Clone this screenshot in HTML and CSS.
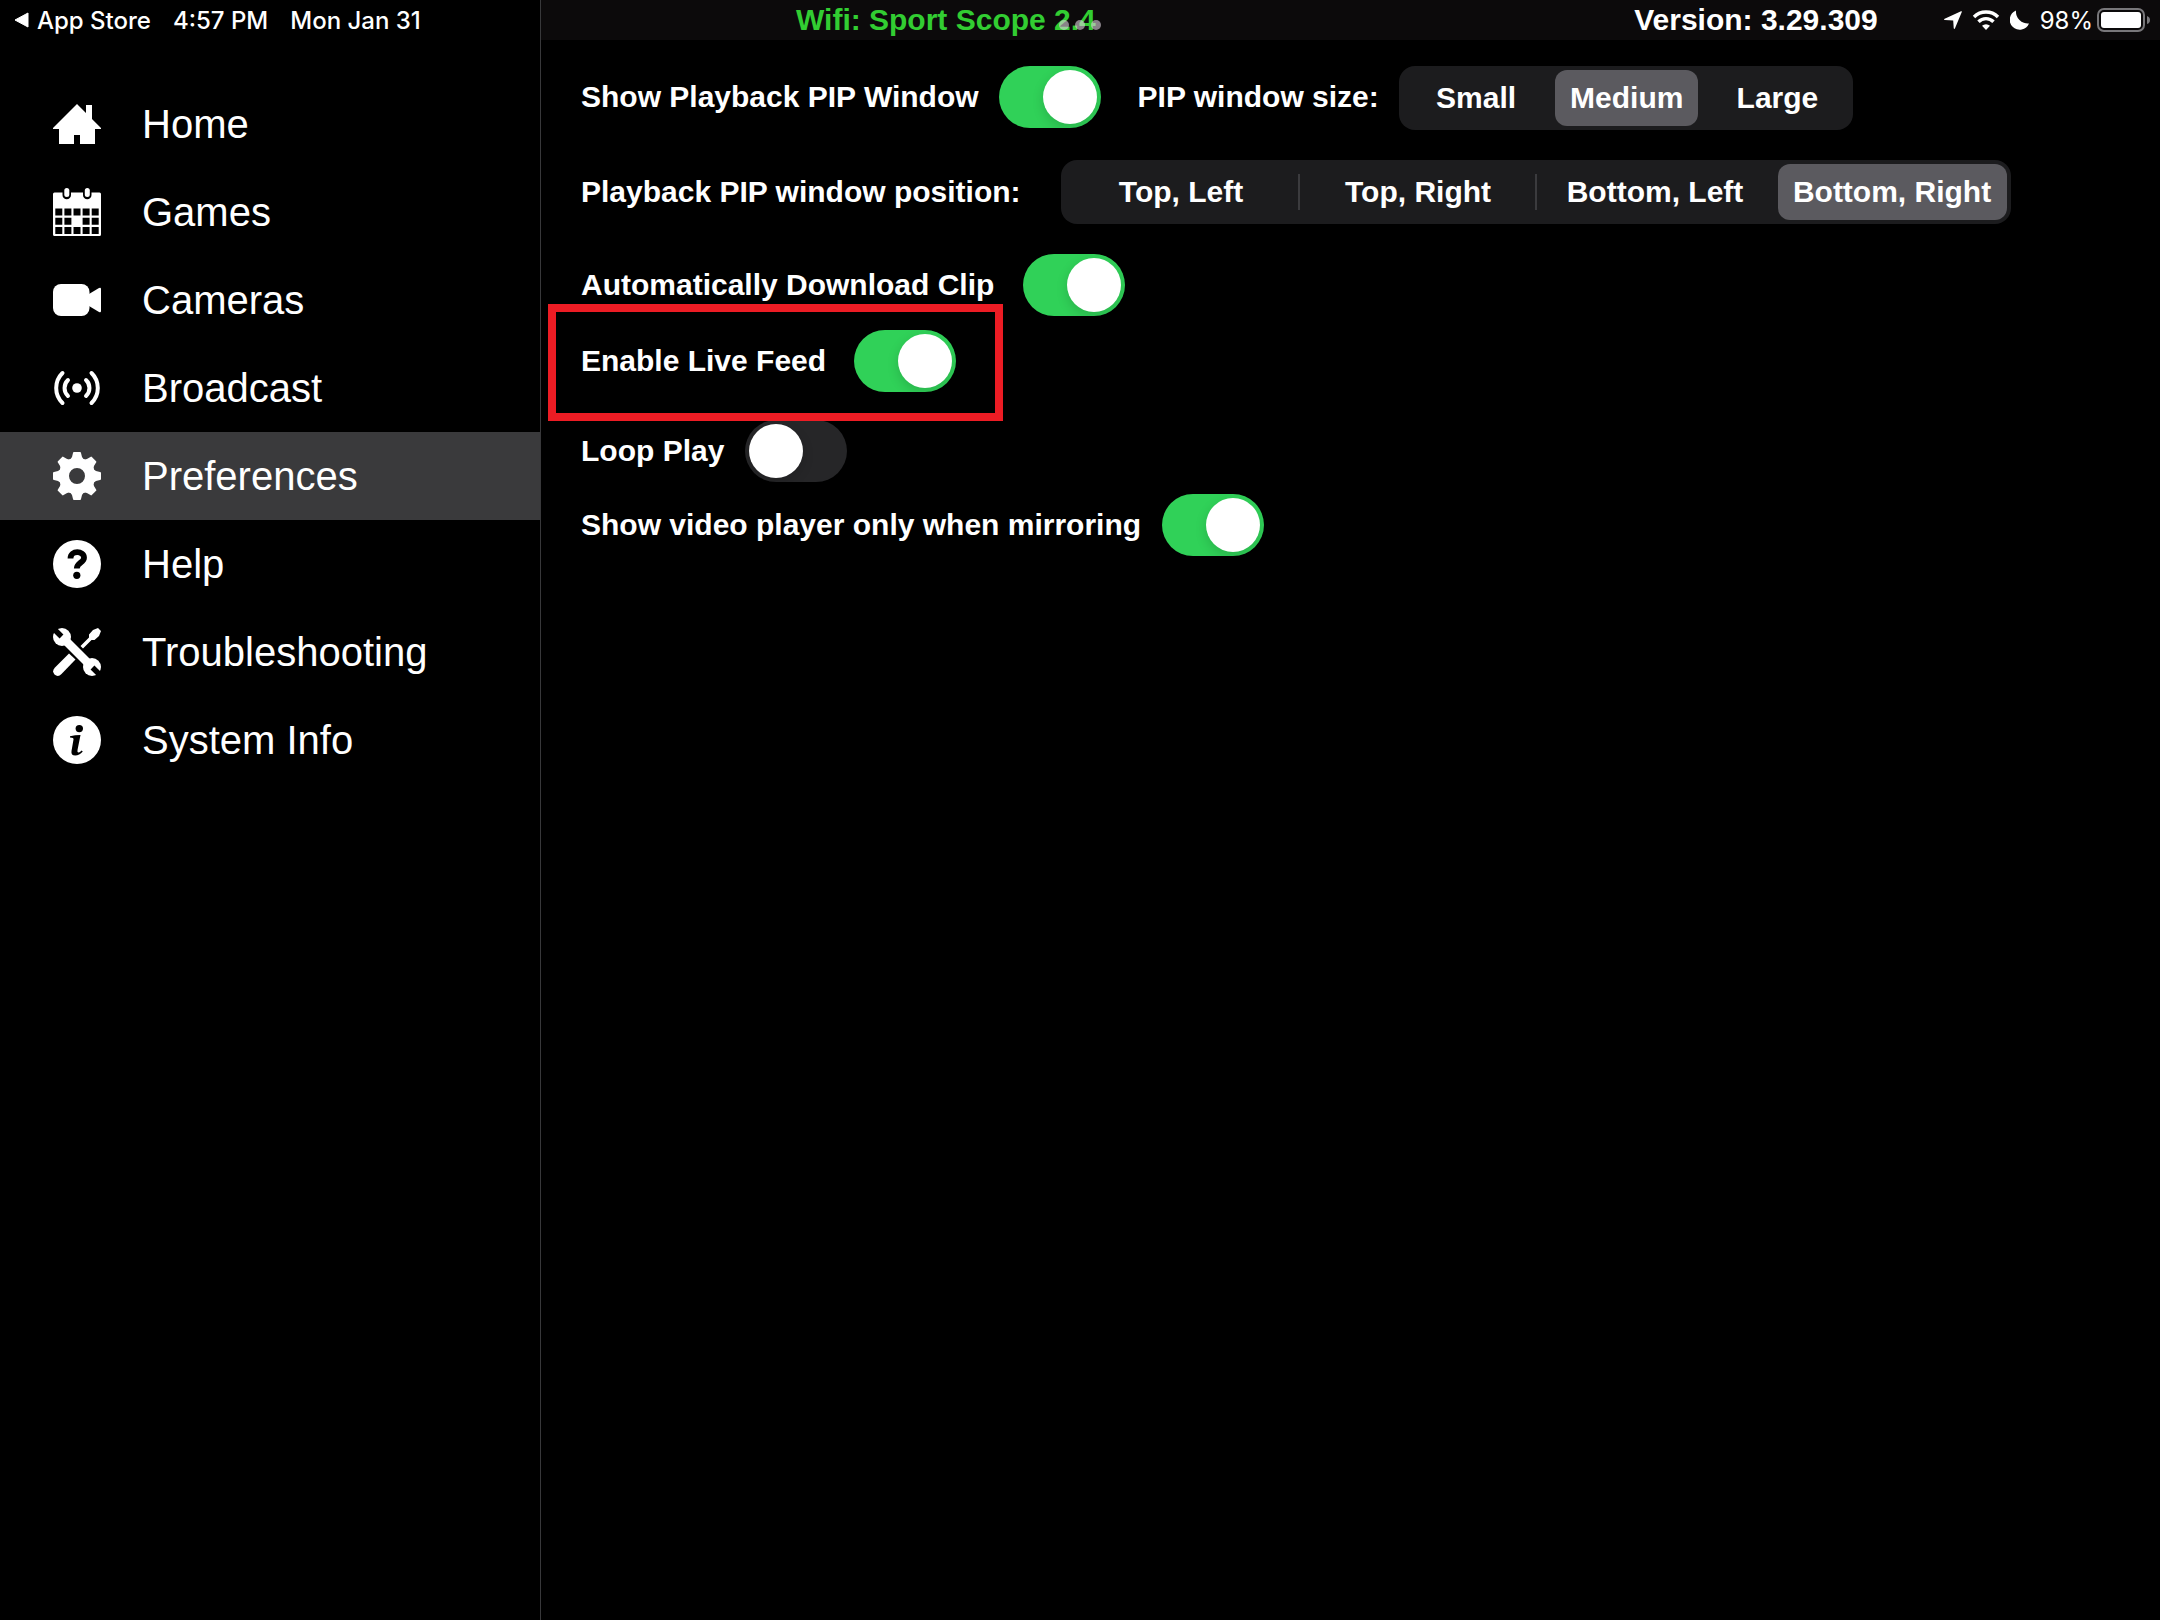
FILE: index.html
```html
<!DOCTYPE html>
<html lang="en">
<head>
  <meta charset="UTF-8">
  <meta name="viewport" content="width=device-width, initial-scale=1">
  <title>Preferences</title>
  <link rel="stylesheet" href="styles.css">
</head>
<body>

  <aside class="sidebar">
    <div class="status status-left">
      <a class="back-link" href="#">
        <svg width="15" height="16" viewBox="0 0 15 16"><path d="M14 1v14L1 8z" stroke="#fff" stroke-linejoin="round"/></svg>
        App Store
      </a>
      <span>4:57 PM</span>
      <span>Mon Jan 31</span>
    </div>

    <nav class="menu">
      <a href="#">
        <svg class="icon" viewBox="0 0 48 48"><path d="M24 4l9 9V5h6v14l9 9v1h-6v15H27v-9h-6v9H6V29H0v-1z"/></svg>
        Home
      </a>
      <a href="#">
        <svg class="icon" viewBox="0 0 48 48">
          <path fill-rule="evenodd" d="M1.500 4.500H9.500V7a4.250 4.250 0 0 0 8.500 0V4.500H30V7a4.250 4.250 0 0 0 8.500 0V4.500H46.500Q48 4.500 48 6V46.500Q48 48 46.500 48H1.500Q0 48 0 46.500V6Q0 4.500 1.500 4.500z
            M2.300 20.600h7v7h-7z M11.400 20.600h7v7h-7z M20.500 20.600h7v7h-7z M29.600 20.600h7v7h-7z M38.700 20.600h7v7h-7z
            M2.300 29.800h7v7h-7z M11.400 29.800h7v7h-7z M29.600 29.800h7v7h-7z M38.700 29.800h7v7h-7z
            M2.300 39h7v7h-7z M11.400 39h7v7h-7z M20.500 39h7v7h-7z M29.600 39h7v7h-7z M38.700 39h7v7h-7z"/>
          <rect x="11.300" width="5" height="9" rx="2.500"/>
          <rect x="31.800" width="5" height="9" rx="2.500"/>
        </svg>
        Games
      </a>
      <a href="#">
        <svg class="icon" viewBox="0 0 48 48">
          <rect y="8" width="36.500" height="32" rx="8"/>
          <path d="M36 18l10-6q2-1 2 1v22q0 2-2 1l-10-6z"/>
        </svg>
        Cameras
      </a>
      <a href="#">
        <svg class="icon" viewBox="0 0 48 48">
          <circle cx="24" cy="24" r="4.800"/>
          <path class="line" d="M9.500 9a21 21 0 0 0 0 30M38.500 9a21 21 0 0 1 0 30M15 16a11 11 0 0 0 0 16M33 16a11 11 0 0 1 0 16"/>
        </svg>
        Broadcast
      </a>
      <a href="#" class="active">
        <svg class="icon" viewBox="0 0 48 48">
          <circle cx="24" cy="24" r="13" fill="none" stroke="#fff" stroke-width="10"/>
          <path id="tooth" d="M21 0h6q1 0 1 1l1 4q1 2 3 3l-2 3H18l-2-3q2-1 3-3l1-4q0-1 1-1z"/>
          <use href="#tooth" transform="rotate(45 24 24)"/>
          <use href="#tooth" transform="rotate(90 24 24)"/>
          <use href="#tooth" transform="rotate(135 24 24)"/>
          <use href="#tooth" transform="rotate(180 24 24)"/>
          <use href="#tooth" transform="rotate(225 24 24)"/>
          <use href="#tooth" transform="rotate(270 24 24)"/>
          <use href="#tooth" transform="rotate(315 24 24)"/>
        </svg>
        Preferences
      </a>
      <a href="#">
        <svg class="icon" viewBox="0 0 48 48">
          <circle cx="24" cy="24" r="24"/>
          <path d="M17.500 18.500c0-8.500 13.500-8 13.500-.800 0 5-7.200 5-7.200 10.800" fill="none" stroke="#000" stroke-width="5.800"/>
          <circle cx="23.800" cy="35.300" r="3.600" fill="#000"/>
        </svg>
        Help
      </a>
      <a href="#">
        <svg class="icon" viewBox="0 0 48 48">
          <path d="M16 25.500l6.500 6L8.500 46q-3.500 3.500-7 .500-3-3.500.500-7z"/>
          <path d="M27.500 18l8.500-8.500V6.500l4-4.500 5-2 3 3-2 5-4.500 4h-3L30 20.500z"/>
          <path d="M12 12l25 25" stroke="#fff" stroke-width="8.500"/>
          <circle cx="9" cy="9" r="9"/>
          <circle cx="39" cy="39" r="9"/>
          <path d="M-3-3l11.500 11.500M51 51L39.500 39.500" stroke="#000" stroke-width="5.500" stroke-linejoin="round"/>
        </svg>
        Troubleshooting
      </a>
      <a href="#">
        <svg class="icon" viewBox="0 0 48 48">
          <circle cx="24" cy="24" r="24"/>
          <circle cx="26.300" cy="12.600" r="3.700" fill="#000"/>
          <path d="M17 21.500v-1.300q5-1.200 10.500-1.200l-3 15q-.500 3 1.500 2.500 1.300-.500 2.500-2l1.300 1q-3.500 4-7.500 4-4.500 0-3.800-4.500l2-11.500q.500-2-3.500-2z" fill="#000"/>
        </svg>
        System Info
      </a>
    </nav>
  </aside>

  <main class="content">
    <header class="status status-main">
      <span class="wifi-name">Wifi: Sport Scope 2.4</span>
      <span class="version">Version: 3.29.309</span>
      <div class="indicators">
        <svg width="18" height="18" viewBox="0 0 18 18"><path d="M17 .300Q18.200 0 17.800 1L11 17.300q-.900 1.500-1.300-.200L9.200 9.500.900 9Q-.800 8.500.700 7.700z"/></svg>
        <svg width="28" height="20" viewBox="0 0 28 20">
          <path d="M2 7a17 17 0 0 1 24 0M6.500 11.800a10.500 10.500 0 0 1 15 0" fill="none" stroke="#fff" stroke-width="3.400"/>
          <path d="M14 20l-4-4.300a6 6 0 0 1 8 0z"/>
        </svg>
        <svg width="20" height="20" viewBox="0 0 20 20"><path d="M6 .500A12 12 0 0 0 19 13.500 10 10 0 1 1 6 .500z"/></svg>
        <span>98%</span>
        <svg width="54" height="24" viewBox="0 0 54 24">
          <rect x="1" y="1" width="46" height="22" rx="6" fill="none" stroke="#78777a" stroke-width="2"/>
          <rect x="4" y="4" width="40" height="16" rx="3"/>
          <path d="M50 8q3 1 3 4t-3 4z" fill="#78777a"/>
        </svg>
      </div>
    </header>

    <form class="settings">
      <div class="row first">
        <label for="pip">Show Playback PIP Window</label>
        <input type="checkbox" class="switch" id="pip" checked>
        <span class="second" id="sizeLabel">PIP window size:</span>
        <div class="segments size" role="radiogroup" aria-labelledby="sizeLabel">
          <label><input type="radio" name="size"><span>Small</span></label>
          <label><input type="radio" name="size" checked><span>Medium</span></label>
          <label><input type="radio" name="size"><span>Large</span></label>
        </div>
      </div>

      <div class="row wide">
        <span id="positionLabel">Playback PIP window position:</span>
        <div class="segments position" role="radiogroup" aria-labelledby="positionLabel">
          <label><input type="radio" name="position"><span>Top, Left</span></label>
          <label><input type="radio" name="position"><span>Top, Right</span></label>
          <label><input type="radio" name="position"><span>Bottom, Left</span></label>
          <label><input type="radio" name="position" checked><span>Bottom, Right</span></label>
        </div>
      </div>

      <div class="row medium">
        <label for="download">Automatically Download Clip</label>
        <input type="checkbox" class="switch" id="download" checked>
      </div>

      <div class="row medium highlight">
        <label for="live">Enable Live Feed</label>
        <input type="checkbox" class="switch" id="live" checked>
      </div>

      <div class="row">
        <label for="loop">Loop Play</label>
        <input type="checkbox" class="switch" id="loop">
      </div>

      <div class="row">
        <label for="mirroring">Show video player only when mirroring</label>
        <input type="checkbox" class="switch" id="mirroring" checked>
      </div>
    </form>
  </main>

  <!-- multitasking dots -->
  <div class="dots"><i></i><i></i><i></i></div>

</body>
</html>
```
FILE: styles.css
```css
* {
  box-sizing: border-box;
}

body {
  margin: 0;
  min-height: 100vh;
  display: grid;
  grid-template-columns: 25% 1fr;
  background-color: #000;
  color: #fff;
  font-family: "Liberation Sans", Arial, sans-serif;
}

svg {
  display: block;
  flex: none;
  fill: #fff;
}

a {
  color: inherit;
  text-decoration: none;
}

/* status bar */
.status {
  display: flex;
  align-items: center;
  height: 40px;
  font-family: Inter, sans-serif;
  font-size: 24px;
  font-weight: 500;
  white-space: nowrap;
}

.status-left {
  gap: 22px;
  padding-left: 14px;
}

.back-link {
  display: flex;
  align-items: center;
  gap: 8px;
}

.status-main {
  padding-left: 255px;
  padding-right: 9px;
  background-color: #0c0a0b;
}

.wifi-name,
.version {
  font-family: "Liberation Sans", Arial, sans-serif;
  font-size: 30px;
  font-weight: bold;
}

.wifi-name {
  color: #32cd32;
}

.version {
  margin-left: auto;
  margin-right: 66px;
}

.indicators {
  display: flex;
  align-items: center;
  gap: 10px;
  font-weight: 400;
}

.indicators span {
  margin-right: -6px;
}

.dots {
  position: absolute;
  top: 20px;
  left: 50%;
  width: 42px;
  margin-left: -21px;
  display: flex;
  justify-content: space-between;
}

.dots i {
  width: 10px;
  height: 10px;
  border-radius: 50%;
  background-color: rgba(220, 210, 220, 0.6);
}

/* sidebar */
.menu {
  margin-top: 40px;
}

.menu a {
  display: flex;
  align-items: center;
  gap: 41px;
  height: 88px;
  padding-left: 53px;
  font-size: 40px;
}

.menu a.active {
  background-color: #3a3a3c;
}

.icon {
  width: 48px;
  height: 48px;
}

.line {
  fill: none;
  stroke: #fff;
  stroke-width: 4;
  stroke-linecap: round;
}

/* preferences */
.content {
  border-left: 1px solid #38383a;
}

.settings {
  display: flex;
  flex-direction: column;
  align-items: flex-start;
  padding: 26px 40px;
  font-size: 30px;
  font-weight: bold;
  white-space: nowrap;
}

.row {
  display: flex;
  align-items: center;
  gap: 21px;
  margin-bottom: 12px;
}

.row.first {
  gap: 20px;
  margin-bottom: 32px;
}

.row.wide {
  gap: 40px;
  margin-bottom: 30px;
}

.row.medium {
  gap: 29px;
  margin-bottom: 14px;
}

.row.highlight {
  position: relative;
  gap: 28px;
  margin-bottom: 28px;
}

.row.highlight::after {
  content: "";
  position: absolute;
  inset: -26px -47px -29px -33px;
  border: 8px solid #ed1c24;
  pointer-events: none;
}

.second {
  margin-left: 17px;
}

.switch {
  appearance: none;
  width: 102px;
  height: 62px;
  margin: 0;
  padding: 4px;
  border-radius: 31px;
  background-color: #262628;
  cursor: pointer;
}

.switch::before {
  content: "";
  display: block;
  width: 54px;
  height: 54px;
  border-radius: 50%;
  background-color: #fff;
  box-shadow: 0 4px 12px rgba(0, 0, 0, 0.15);
}

.switch:checked {
  background-color: #30d158;
}

.switch:checked::before {
  margin-left: auto;
}

.segments {
  display: grid;
  grid-auto-flow: column;
  grid-auto-columns: 1fr;
  height: 64px;
  padding-left: 2px;
  border-radius: 16px;
  background-color: #1c1c1e;
}

.size {
  width: 454px;
  margin-bottom: -2px;
}

.position {
  width: 950px;
}

.segments label {
  position: relative;
  display: flex;
  padding: 4px;
  cursor: pointer;
}

.segments input {
  position: absolute;
  opacity: 0;
}

.segments span {
  flex: 1;
  display: flex;
  align-items: center;
  justify-content: center;
  border-radius: 12px;
}

.segments input:checked + span {
  background-color: #5b5a5f;
}

.position label:nth-child(-n+2)::after {
  content: "";
  position: absolute;
  top: 14px;
  right: 0;
  width: 2px;
  height: 36px;
  background-color: #3b3b3e;
}
```
